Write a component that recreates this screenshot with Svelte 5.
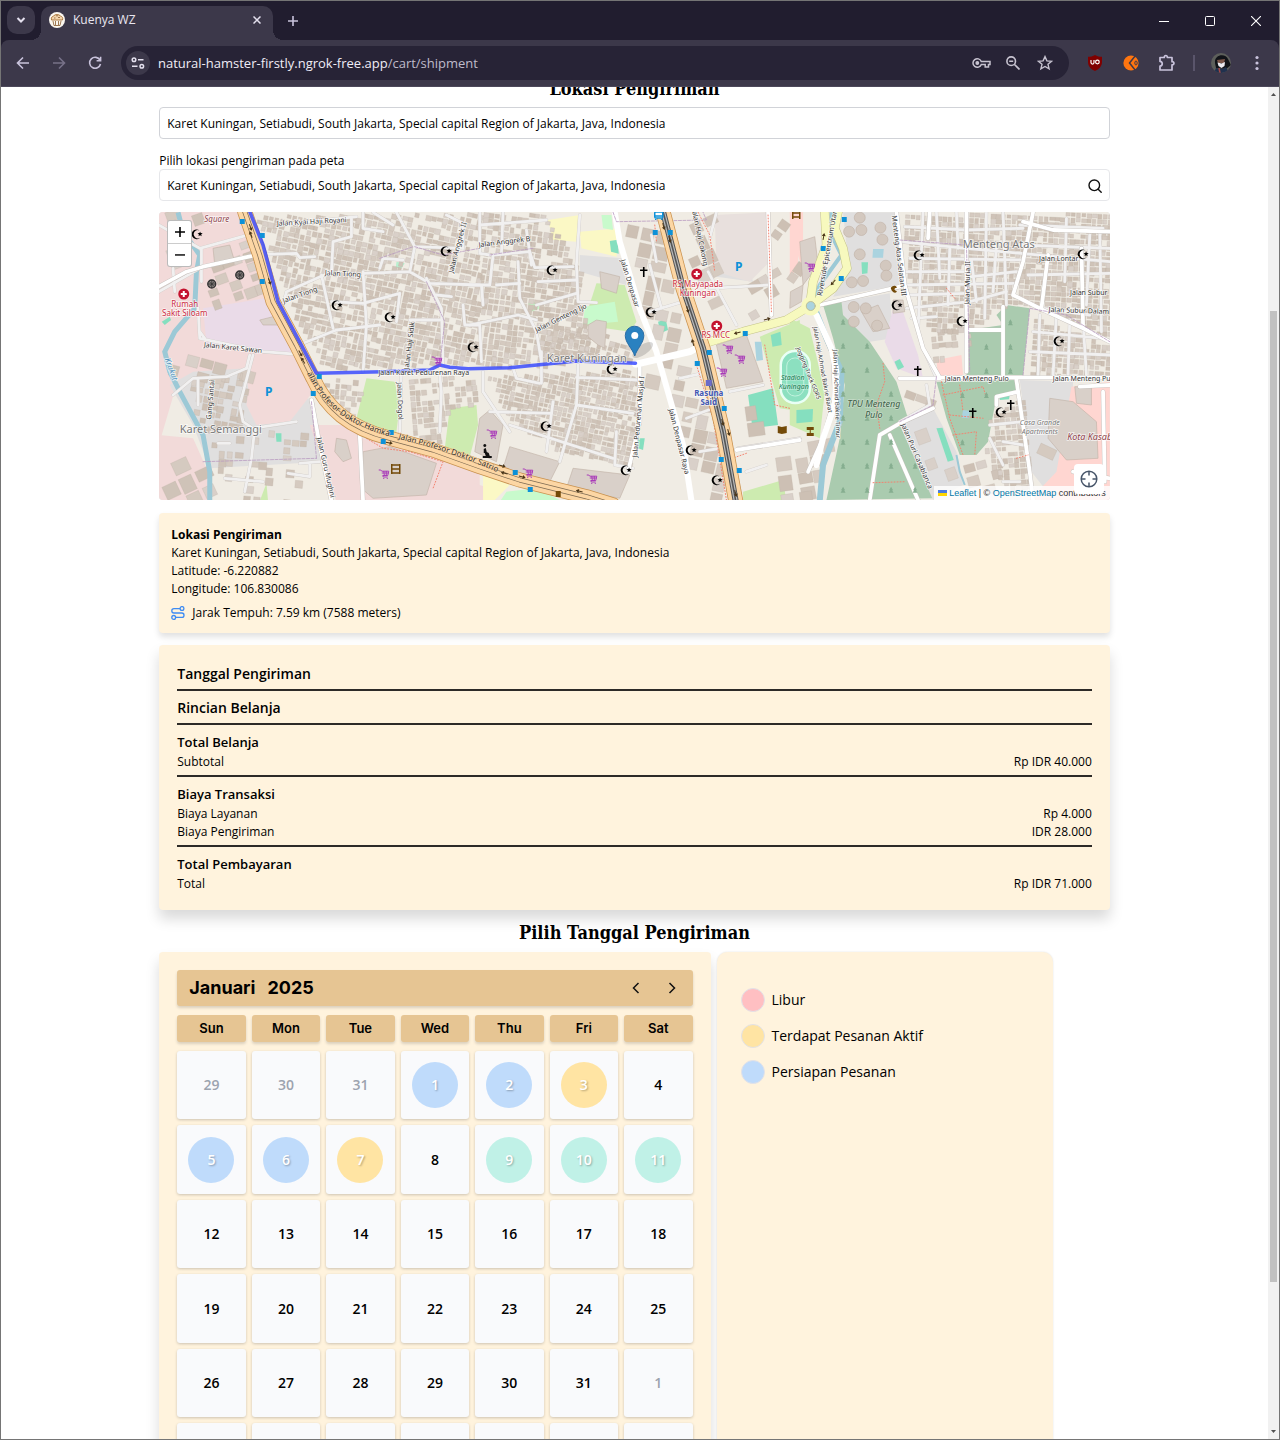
<script>
  const address = 'Karet Kuningan, Setiabudi, South Jakarta, Special capital Region of Jakarta, Java, Indonesia';
  let delivery = $state(address);
  let search = $state(address);

  const weekdays = ['Sun', 'Mon', 'Tue', 'Wed', 'Thu', 'Fri', 'Sat'];
  const marks = { 1: 'prep', 2: 'prep', 3: 'active', 5: 'prep', 6: 'prep', 7: 'active', 9: 'open', 10: 'open', 11: 'open' };
  const days = Array.from({ length: 42 }, (_, i) => {
    const n = i - 2;
    if (n < 1) return { label: 31 + n, out: true, mark: '' };
    if (n > 31) return { label: n - 31, out: true, mark: '' };
    return { label: n, out: false, mark: marks[n] ?? '' };
  });

  const legend = [
    ['off', 'Libur'],
    ['active', 'Terdapat Pesanan Aktif'],
    ['prep', 'Persiapan Pesanan']
  ];

  const sections = [
    { title: 'Total Belanja', rows: [['Subtotal', 'Rp IDR 40.000']] },
    { title: 'Biaya Transaksi', rows: [['Biaya Layanan', 'Rp 4.000'], ['Biaya Pengiriman', 'IDR 28.000']] },
    { title: 'Total Pembayaran', rows: [['Total', 'Rp IDR 71.000']] }
  ];

  // The map is surveyed in three sheets, three units to the pixel.
  const W = -9, C = 311, E = 631;
  const at = (ox, s) =>
    s.replace(/(-?\d+),(-?\d+)/g, (_, x, y) => `${(x / 3 + ox).toFixed(1)},${(y / 3 - 7).toFixed(1)}`);

  const areas = [
    ['#f2dad9', W, '27,20 285,20 340,240 490,520 470,570 300,560 200,500 80,540 27,720'],
    ['#e0dfdf', W, '60,540 130,500 290,490 300,620 480,580 520,770 180,790 130,660'],
    ['#f2dad9', W, '27,690 130,700 175,800 180,890 27,890'],
    ['#f2dad9', W, '300,500 470,500 490,560 420,650 320,660 290,600'],
    ['#f2dad9', W, '480,660 580,660 640,700 720,715 990,800 990,890 640,890 560,890'],
    ['#eadbe8', W, '160,310 355,278 435,445 360,440 170,415'],
    ['#cdebb0', W, '650,520 735,530 750,600 740,680 690,690 620,640'],
    ['#cdebb0', W, '900,610 980,600 985,660 960,755 885,730'],
    ['#cdebb0', W, '350,835 330,888 355,888'],
    ['#85dfbf', W, '378,685 395,685 395,710 380,710'],
    ['#b9f0d0', W, '740,170 765,175 755,190 738,188'],
    ['#85dfbf', W, '36,350 60,335 64,345 45,360'],
    ['#fbf8c5', C, '235,45 330,30 320,110 250,105'],
    ['#fbf8c5', C, '330,80 450,70 440,155 335,130'],
    ['#e0dfdf', C, '330,150 460,160 470,240 330,200'],
    ['#cdebb0', C, '380,235 465,240 500,350 480,380 340,360'],
    ['#c8facc', C, '345,305 435,290 445,350 340,360'],
    ['#c8facc', C, '175,295 200,290 210,310 185,320'],
    ['#c8facc', C, '395,30 425,30 430,75 400,70'],
    ['#85dfbf', C, '420,108 443,104 447,146 424,140'],
    ['#85dfbf', C, '565,350 588,343 595,375 572,385'],
    ['#85dfbf', C, '505,700 525,700 520,735 505,730'],
    ['#cdebb0', C, '0,610 20,640 10,710 0,710'],
    ['#f2dad9', C, '0,830 60,850 60,890 0,890'],
    ['#fbf8c5', C, '40,800 120,840 70,890 40,890'],
    ['#c8facc', C, '110,860 200,850 280,890 90,890'],
    ['#e0dfdf', C, '730,170 820,130 850,230 740,215'],
    ['#e8e0dd', C, '735,30 895,22 900,170 840,230 740,200'],
    ['#ffd6d1', C, '960,22 1000,22 1000,200 975,120'],
    ['#cdebb0', C, '870,395 990,345 1000,620 930,610'],
    ['#85dfbf', C, '835,570 910,550 925,660 848,670'],
    ['#85dfbf', C, '903,390 932,380 936,420 908,425'],
    ['#aad3df', C, '855,410 875,410 880,465 860,468'],
    ['#cdebb0', C, '820,860 940,825 950,890 820,890'],
    ['#ffd6d1', E, '0,22 30,22 25,180 0,225'],
    ['#e0dfdf', E, '160,22 320,22 335,240 130,275 180,190 170,120'],
    ['#e0dfdf', E, '155,290 300,265 310,400 240,410 160,330'],
    ['#aacbaf', E, '100,300 155,288 160,330 240,410 320,530 430,880 110,885 150,700 165,540 130,400'],
    ['#aacbaf', E, '535,375 640,360 620,330 650,300 720,310 700,510 530,510'],
    ['#aacbaf', E, '440,530 680,525 680,560 620,575 595,710 560,750 510,750 470,640'],
    ['#eadbe8', E, '310,310 340,320 385,450 400,520 320,490 285,410'],
    ['#ffd6d1', E, '440,465 515,450 520,510 445,515'],
    ['#e0dfdf', E, '330,660 430,610 500,740 520,840 430,885'],
    ['#e0dfdf', E, '690,525 850,530 840,800 780,870 725,800'],
    ['#ffd6d1', E, '845,545 960,530 960,885 720,885 800,800'],
    ['#cdebb0', E, '0,340 60,370 105,560 90,700 0,660'],
    ['#85dfbf', E, '440,670 458,668 492,765 474,770'],
    ['#85dfbf', E, '314,470 330,462 343,486 325,495'],
    ['#85dfbf', E, '215,172 235,172 233,205 217,207'],
    ['#85dfbf', E, '20,615 70,612 68,650 20,655'],
    ['#85dfbf', E, '630,572 660,570 658,583 630,585'],
    ['#aad3df', E, '250,132 282,132 280,158 248,158'],
    ['#aad3df', E, '520,615 540,618 538,640 516,638']
  ].map(([fill, ox, p]) => ({ fill, p: at(ox, p) }));

  // Housing blocks: outline, cell size, rotation and the odds that a cell is built.
  const blocks = [
    [W, '300,30 780,22 990,22 990,470 520,485 420,300 340,80', 17, 12, 0.86],
    [W, '520,520 640,520 610,640 540,600', 17, 5, 0.7],
    [W, '760,520 880,510 980,520 980,590 890,620 870,720 780,690', 17, -5, 0.75],
    [W, '100,520 280,500 280,660 180,690 140,640', 22, 10, 0.65],
    [W, '180,700 460,650 470,770 200,790', 24, 4, 0.35],
    [W, '40,230 150,180 150,20 27,20', 36, -20, 0.35],
    [W, '170,100 310,60 340,250 170,300', 34, -20, 0.55],
    [W, '50,460 150,430 300,460 290,490 90,530', 42, 15, 0.7],
    [W, '30,740 150,740 160,885 30,885', 54, -25, 0.7],
    [W, '190,800 420,780 470,885 190,885', 30, 5, 0.4],
    [C, '30,22 220,22 330,190 330,290 370,450 200,480 30,480', 17, 8, 0.84],
    [C, '220,370 370,360 490,430 480,460 210,460', 17, 15, 0.78],
    [C, '50,510 210,500 500,490 500,640 480,780 300,750 120,650', 15, 12, 0.93],
    [C, '460,60 560,40 640,330 680,430 570,460 510,310', 46, 12, 0.74],
    [C, '510,480 660,470 730,680 770,870 670,880 600,600', 44, 12, 0.72],
    [C, '630,40 700,30 780,330 720,400 680,300', 46, -25, 0.7],
    [C, '770,560 830,550 850,690 790,700', 50, -8, 0.8],
    [C, '810,740 990,700 990,885 830,850', 56, -8, 0.6],
    [C, '820,240 900,180 900,310 800,350', 38, -30, 0.6],
    [C, '910,30 960,30 990,180 920,270', 38, 35, 0.5],
    [E, '340,22 960,22 960,400 730,300 700,290 640,300 540,370 420,380 350,200', 16, 3, 0.93],
    [E, '725,330 960,420 960,510 715,510', 16, 4, 0.9],
    [E, '390,380 530,360 530,440 430,460', 20, -5, 0.6],
    [E, '590,640 700,570 715,840 660,870 580,760', 17, -4, 0.8],
    [E, '330,550 430,530 420,600 340,640', 34, 20, 0.75],
    [E, '345,660 430,630 500,820 430,850', 46, -20, 0.4],
    [E, '0,720 100,700 80,885 0,885', 44, -10, 0.75],
    [E, '510,750 640,800 640,870 540,870', 38, -15, 0.5],
    [E, '730,590 840,580 830,790 740,790', 52, 25, 0.35]
  ];

  function build() {
    let seed = 7;
    const rnd = () => ((seed = (seed * 16807) % 2147483647) / 2147483647);
    const tones = ['#d5cac0', '#cfc3b8', '#d9d0c9', '#cdc0b4'];
    const out = [];
    for (const [ox, outline, size, turn, odds] of blocks) {
      const poly = outline.split(' ').map((p) => p.split(',').map(Number));
      const inside = (x, y) => {
        let hit = false;
        for (let i = 0, j = poly.length - 1; i < poly.length; j = i++) {
          const [xi, yi] = poly[i], [xj, yj] = poly[j];
          if (yi > y !== yj > y && x < ((xj - xi) * (y - yi)) / (yj - yi) + xi) hit = !hit;
        }
        return hit;
      };
      const cx = 500, cy = 450, a = (turn * Math.PI) / 180;
      for (let v = -700; v < 700; v += size) {
        for (let u = -750; u < 750; u += size) {
          const x = cx + u * Math.cos(a) - v * Math.sin(a);
          const y = cy + u * Math.sin(a) + v * Math.cos(a);
          if (!inside(x, y) || rnd() > odds) continue;
          const w = size * (0.62 + rnd() * 0.4), h = size * (0.6 + rnd() * 0.36);
          out.push({
            d: `M${(x / 3 + ox).toFixed(1)} ${(y / 3 - 7).toFixed(1)}l${((w * Math.cos(a)) / 3).toFixed(1)} ${((w * Math.sin(a)) / 3).toFixed(1)}l${((-h * Math.sin(a)) / 3).toFixed(1)} ${((h * Math.cos(a)) / 3).toFixed(1)}l${((-w * Math.cos(a)) / 3).toFixed(1)} ${((-w * Math.sin(a)) / 3).toFixed(1)}z`,
            t: Math.floor(rnd() * 4)
          });
        }
      }
    }
    return tones.map((fill, t) => ({ fill, d: out.filter((b) => b.t === t).map((b) => b.d).join('') }));
  }
  const houses = build();

  const landmarks = [
    [W, '640,740 720,725 860,775 830,870 670,880 635,850'],
    [W, '560,700 590,705 605,760 580,770 555,740'],
    [W, '190,130 240,120 255,170 195,180'],
    [W, '330,345 390,330 400,360 340,360'],
    [C, '30,640 60,615 100,660 80,770 15,740'],
    [C, '120,725 270,770 240,830 100,790'],
    [C, '310,790 480,810 450,880 290,850'],
    [C, '740,420 830,390 880,530 770,550'],
    [C, '355,360 380,345 410,350 405,430 385,420 355,395'],
    [C, '390,200 450,215 440,265 395,250'],
    [E, '215,320 265,300 300,370 250,380'],
    [E, '310,285 340,285 345,320 310,325'],
    [E, '780,580 850,590 920,650 925,760 830,765 775,700'],
    [E, '855,545 905,545 905,600 860,595'],
    [E, '30,110 75,95 85,180 40,240'],
    [E, '2,260 40,240 35,290 0,310']
  ].map(([ox, p]) => at(ox, p));

  const tanks = [[210,38],[272,68],[178,80],[215,75],[278,104],[210,148],[288,182],[186,232],[220,228],[290,212],[192,306],[228,310],[192,350],[262,362]]
    .map(([x, y]) => [x / 3 + E, y / 3 - 7]);

  const rivers = [
    [5, at(W, 'M85,22 L100,80 150,150 140,200 135,310 75,380 45,440 60,500 90,560 160,690 180,800 180,887')],
    [4, at(E, 'M125,22 L125,90 155,150 90,240 62,303')],
    [6, at(E, 'M75,310 L110,400 155,500 150,650 100,780 90,887')],
    [2, at(E, 'M500,750 L510,800 525,840')]
  ];

  const minor = [
    at(W, 'M27,260 L150,190 310,150 440,145 450,158 495,155'),
    at(W, 'M27,60 L150,130 330,80 M155,130 L155,230 M70,190 L75,260'),
    at(W, 'M145,310 L150,400 340,440 470,450 M300,450 L290,490 M165,400 L150,380'),
    at(W, 'M70,570 L130,520 230,515 290,490 M145,520 L145,600 M310,450 L270,600 280,650 310,670 440,650'),
    at(W, 'M315,670 L305,760 285,860 M225,820 L340,830 M205,715 L240,715 M450,775 L510,770 M480,775 L480,815 415,805'),
    at(W, 'M390,60 L620,35 M605,40 L605,95 550,110 545,200 410,260 400,300'),
    at(W, 'M515,210 L550,370 M460,415 L560,375 690,360 M640,200 L650,360 640,500 M545,290 L640,295 750,265 740,350'),
    at(W, 'M740,22 L795,125 780,200 840,235 990,240 M795,125 L940,130 M640,205 L780,200 M690,190 L700,160 760,165'),
    at(W, 'M830,220 L875,310 880,480 M780,345 L870,345 M755,500 L750,680 M870,510 L875,560 870,680 M940,300 L945,360 990,360'),
    at(W, 'M640,22 L640,70 700,80 M860,270 L905,275 M670,22 L730,60 M890,30 L940,55 940,130'),
    at(C, 'M0,240 L60,240 70,150 180,140 195,188 310,185 M35,240 L40,300 M30,145 L60,150'),
    at(C, 'M185,180 L170,75 M330,30 L320,180 325,290 380,293 M145,170 L150,280 200,380 215,470 M215,440 L215,535'),
    at(C, 'M200,300 L320,265 M40,500 L40,560 120,680 M130,490 L140,520 210,535 M60,620 L245,625 M120,660 L430,760'),
    at(C, 'M325,480 L320,600 270,770 M320,517 L510,525 M320,600 L490,625 M250,590 L230,740 M440,680 L435,780 490,790'),
    at(C, 'M540,180 L575,310 M540,320 L640,290 M545,90 L560,170 M630,520 L720,500 M650,640 L730,610 M690,740 L750,730'),
    at(C, 'M30,60 L230,45 M30,22 L30,140 M100,22 L95,145 M205,230 L320,225 M200,345 L145,330 0,360 M30,360 L35,470 M80,240 L150,235'),
    at(C, 'M715,200 L800,360 M720,250 L900,240 M740,22 L720,100 M780,560 L880,540 M805,730 L990,700 M830,800 L890,780'),
    at(E, 'M330,110 L530,130 960,170 M360,160 L700,165 M345,240 L680,235 M350,310 L540,290 650,260'),
    at(E, 'M400,22 L385,380 M440,22 L450,220 M590,22 L585,340 M480,130 L475,300 M640,22 L650,300 M620,120 L610,260'),
    at(E, 'M345,65 L530,75 700,70 M340,200 L540,200 M545,215 L680,200 M355,270 L530,265 M545,165 L560,290 M365,340 L440,335 M500,22 L505,130'),
    at(E, 'M690,60 L940,70 M830,40 L825,230 M900,90 L890,300 M760,310 L900,330 M730,380 L940,400 M880,350 L890,510 M800,330 L790,510'),
    at(E, 'M715,210 L960,205 M690,120 L960,130 M720,440 L960,450 M750,330 L745,510 M840,345 L835,510 M930,70 L935,380'),
    at(E, 'M400,430 L440,520 M410,540 L420,600 330,650 M600,660 L700,650 M640,710 L700,720 M600,700 L640,780 M690,830 L640,830')
  ];

  const streets = [
    at(W, 'M485,585 L510,720 545,887'),
    at(W, 'M630,690 L640,887'),
    at(W, 'M27,245 L110,200 160,185 320,150'),
    at(C, 'M435,22 L450,110 510,310 560,440 600,580 640,720 665,887'),
    at(C, 'M497,480 L660,440 715,410'),
    at(C, 'M510,480 L510,650 475,800'),
    at(C, 'M800,735 L990,705'),
    at(C, 'M895,22 L905,330'),
    at(E, 'M80,330 L130,450 135,580 100,700 55,800 M90,300 L330,245'),
    at(E, 'M320,22 L345,240 400,430 450,518 960,518'),
    at(E, 'M730,22 L700,170 670,270 760,315 880,370 960,410'),
    at(E, 'M680,525 L720,800 730,885 M620,600 L620,575 685,560'),
    at(E, 'M700,50 L790,75 960,80 M775,150 L755,310 M875,130 L880,360'),
    at(E, 'M240,885 L270,690 330,655 430,610 M300,690 L385,885 M420,22 L415,100'),
    at(E, 'M535,375 L640,375 640,305 M640,375 L640,510 M530,22 L530,500'),
    at(E, 'M330,520 L450,520 M870,545 L960,540 M940,560 L945,830 M850,800 L960,820')
  ];

  const trunks = [
    at(W, 'M285,20 L330,150 370,290 440,420 490,520 C530,610 600,670 720,700 L850,735 990,785') + at(C, 'L150,825 350,875 430,900'),
    at(C, 'M580,20 L640,250 700,430 760,680 800,900')
  ];
  const yellows = [
    at(C, 'M715,412 L820,380 950,345') + at(E, 'L60,303 L130,250 172,190 160,130 135,70 145,20'),
    at(E, 'M60,303 L70,230 110,120 105,20')
  ];
  const paths = [
    at(E, 'M280,475 L285,530 260,600 270,670 M250,833 L345,830'),
    at(E, 'M455,530 L480,640 520,750 M510,540 L520,620 M460,570 L580,545 590,580 M480,630 L580,640 M490,690 L560,680 555,750'),
    at(C, 'M685,22 L720,90 735,200 M885,420 L915,600 960,610 M680,480 L730,640 770,885 M895,30 L905,320'),
    at(W, 'M650,700 L700,730 780,740 880,770 850,850'),
    at(C, 'M555,60 L560,110 M760,770 L830,745 M320,850 L400,880'),
    at(E, 'M470,250 L495,280 M680,760 L715,750')
  ];
  const bounds = [
    at(W, 'M690,160 L790,125 M795,125 L880,150 990,130 M830,230 L885,350 870,480 M160,770 L500,760 M485,590 L500,760'),
    at(C, 'M430,22 L440,50 710,45 700,22 M60,150 L190,130'),
    at(E, 'M330,105 L530,120 540,500 M700,510 L720,310 830,330 960,410 M440,515 L430,600 330,650')
  ];

  const route = at(W, 'M300,20 L340,120 385,290 500,505 700,500 840,495 870,480 900,487 955,491') + at(C, 'L120,488 320,468 497,475');

  const labels = [
    [58, 10, 0, 'Square', 'mall'],
    [153, 12, -3, 'Jalan Kyai Haji Royani'],
    [184, 64, 3, 'Jalan Tiong'], [142, 85, -20, 'Jalan Tiong'],
    [74, 138, 6, 'Jalan Karet Sawan'], [10, 158, 70, 'Krukut', 'water'],
    [54, 188, -85, 'Gang Santai'], [265, 163, 0, 'Jalan Karet Pedurenan Raya'],
    [253, 134, -83, 'Jalan Haji Sidik'], [239, 189, 88, 'Jalan Dogol'],
    [301, 36, -75, 'Jalan Anggrek II'], [165, 256, 77, 'Jalan Guru Mughni'],
    [346, 32, -7, 'Jalan Anggrek B'], [403, 108, -26, 'Jalan Genteng Ijo'],
    [469, 72, 73, 'Jalan Denpasar'], [518, 230, 76, 'Jalan Denpasar Raya'],
    [482, 205, -85, 'Jalan Pedurenan Masjid I'], [539, 26, 78, 'Jalan Haji Cokong'],
    [26, 95, 0, 'Rumah', 'health'], [26, 104, 0, 'Sakit Siloam', 'health'],
    [539, 75, 0, 'RS Mayapada', 'health'], [539, 84, 0, 'Kuningan', 'health'],
    [557, 126, 0, 'RS MCC', 'health'],
    [550, 184, 0, 'Rasuna', 'station'], [550, 193, 0, 'Said', 'station'],
    [634, 168, 0, 'Stadion', 'sport'], [635, 177, 0, 'Kuningan', 'sport'],
    [671, 40, -80, 'Riverside Epicentrum Utara'],
    [662, 158, 80, 'Jalan Haji Achmad Bakrie Barat', 'small'], [676, 182, 88, 'Jalan Haji Achmad Bakrie Timur', 'small'],
    [648, 162, 68, 'Jogging Track GORS', 'small'],
    [715, 195, 0, 'TPU Menteng', 'park'], [715, 206, 0, 'Pulo', 'park'],
    [756, 245, 67, 'Jalan Puri Casablanca'], [738, 44, 83, 'Menteng Atas Selatan III'],
    [811, 71, -89, 'Jalan Muria II'], [900, 49, 0, 'Jalan Lontar'],
    [930, 83, 0, 'Jalan Subur'], [920, 101, 2, 'Jalan Subur Dalam'],
    [818, 169, 0, 'Jalan Menteng Pulo'], [926, 169, 0, 'Jalan Menteng Pulo'],
    [881, 213, 0, 'Casa Grande', 'estate'], [881, 222, 0, 'Apartments', 'estate'],
    [942, 228, 0, 'Kota Kasablanka', 'mall big'],
    [62, 221, 0, 'Karet Semanggi', 'place'], [428, 150, 0, 'Karet Kuningan', 'place'], [840, 36, 0, 'Menteng Atas', 'place']
  ];

  const mosques = [[38,22],[287,39],[393,58],[178,93],[231,105],[314,135],[387,214],[453,157],[492,100],[467,258],[532,238],[558,268],[760,43],[924,42],[738,93],[803,109],[900,129],[842,200]];
  const crosses = [[485,60],[759,159],[814,201],[852,193]];
  const clinics = [[25,82],[538,62],[558,114]];
  const carts = [[278,149],[225,262],[333,222],[369,261],[569,137],[581,147],[563,160],[433,267],[651,55]];
  const stops = [[83,9],[103,23],[103,69],[160,164],[154,181],[232,220],[224,229],[356,260],[371,277],[496,20],[511,20],[586,121],[550,140],[538,151],[565,196],[562,247],[580,258],[685,7],[664,36],[682,66]];
  const arrows = [[92,16,70],[92,22,250],[111,70,70],[142,142,60],[144,148,240],[231,231,10],[344,254,15],[345,261,195],[364,265,15],[420,279,195],[505,15,75],[511,28,75],[529,98,75],[534,130,255],[564,211,75],[570,221,75],[577,282,75],[609,107,-15],[578,121,165],[665,24,-80],[674,71,130]];
  const trees = [];
  for (let y = 350; y < 880; y += 72) {
    for (let x = 160; x < 420; x += 72) {
      if (x > 120 && x < 210 + (y - 300) * 0.36) trees.push([x / 3 + E, y / 3 - 7]);
    }
  }
  for (const [x, y] of [[590,425],[662,425],[590,497],[662,497],[662,352],[518,570],[590,570],[518,712]]) trees.push([x / 3 + E, y / 3 - 7]);
</script>

<div class="window">
  <header class="chrome">
    <div class="tabs">
      <button class="tab-menu" aria-label="Search tabs">
        <svg width="12" height="12" viewBox="0 0 12 12" fill="none" stroke="#e4e0ee" stroke-width="2"><path d="M2.5 4l3.5 3.5L9.500 4" /></svg>
      </button>
      <div class="tab">
        <svg width="16" height="16" viewBox="0 0 16 16">
          <circle cx="8" cy="8" r="8" fill="#fbf7f0" />
          <path d="M2.500 8c-.8-3 1.300-3.600 2-4 1.500-1.900 5.500-1.900 7 0 1.600.4 2.700 2 2 4z" fill="#f4d6ae" stroke="#ad7b42" />
          <path d="M4 9l1 4.500h6L12 9M6.500 9v4M9.500 9v4M5 6h1.500M9 5.500h2M7 3.800h2" fill="none" stroke="#936a40" stroke-width=".9" />
        </svg>
        <span>Kuenya WZ</span>
        <button aria-label="Close tab">
          <svg width="8" height="8" viewBox="0 0 8 8" stroke="#e4e0ee" stroke-width="1.500"><path d="M.5.5l7 7M7.500.5l-7 7" /></svg>
        </button>
      </div>
      <button class="new-tab" aria-label="New tab">
        <svg width="10" height="10" viewBox="0 0 10 10" stroke="#c9c3dc" stroke-width="1.600"><path d="M5 0v10M0 5h10" /></svg>
      </button>
      <div class="window-buttons">
        <button aria-label="Minimize"><svg width="10" height="10" viewBox="0 0 10 10" stroke="#fff"><path d="M0 5.500h10" /></svg></button>
        <button aria-label="Maximize"><svg width="10" height="10" viewBox="0 0 10 10" fill="none" stroke="#fff"><rect x=".5" y=".5" width="9" height="9" rx="1" /></svg></button>
        <button aria-label="Close"><svg width="10" height="10" viewBox="0 0 10 10" stroke="#fff" stroke-width="1.100"><path d="M0 0l10 10M10 0L0 10" /></svg></button>
      </div>
    </div>
    <div class="toolbar">
      <button aria-label="Back"><svg width="14" height="14" viewBox="0 0 14 14" fill="none" stroke="#c9c3dc" stroke-width="1.600"><path d="M13 7H2M7 1.500L1.500 7 7 12.500" /></svg></button>
      <button aria-label="Forward"><svg width="14" height="14" viewBox="0 0 14 14" fill="none" stroke="#777188" stroke-width="1.600"><path d="M1 7h11M7 1.500L12.500 7 7 12.500" /></svg></button>
      <button aria-label="Reload"><svg width="14" height="14" viewBox="0 0 14 14" fill="none" stroke="#c9c3dc" stroke-width="1.600"><path d="M12 4.200A5.500 5.500 0 1 0 12.500 8M12.600.8v4H8.600" /></svg></button>
      <div class="omnibox">
        <button class="site" aria-label="Site information">
          <svg width="14" height="12" viewBox="0 0 14 12" fill="none" stroke="#e4e0ee" stroke-width="1.500"><circle cx="3" cy="2.800" r="1.800" /><path d="M7 2.800h5.500M1 9.200h5.500" /><circle cx="10.800" cy="9.200" r="1.800" /></svg>
        </button>
        <span class="url">natural-hamster-firstly.ngrok-free.app<i>/cart/shipment</i></span>
        <button aria-label="Passwords"><svg width="19" height="12" viewBox="0 0 19 12" fill="none" stroke="#c7c3d0" stroke-width="1.500"><path d="M9.300 4.500H18v3h-1.500V10h-3.300V7.500H9.300a4.300 4.300 0 1 1 0-3z" /><circle cx="5.300" cy="6" r="1.200" fill="#c7c3d0" /></svg></button>
        <button aria-label="Zoom"><svg width="14" height="14" viewBox="0 0 14 14" fill="none" stroke="#c7c3d0" stroke-width="1.600"><circle cx="5.200" cy="5.200" r="4.300" /><path d="M8.500 8.500l5 5M3.200 5.200h4" /></svg></button>
        <button aria-label="Bookmark"><svg width="16" height="16" viewBox="0 0 16 16" fill="none" stroke="#c7c3d0" stroke-width="1.400"><path d="M8 1.600l1.900 4.300 4.700.4-3.600 3 1.100 4.600L8 11.500l-4.100 2.400L5 9.300l-3.600-3 4.700-.4z" /></svg></button>
      </div>
      <button aria-label="Ad blocker">
        <svg width="14" height="16" viewBox="0 0 14 16"><path d="M7 0c2 1.300 4.500 1.800 7 1.800V7c0 4.500-3 7-7 9-4-2-7-4.500-7-9V1.800C2.500 1.800 5 1.300 7 0z" fill="#800000" /><path d="M3 5v2.600a1.500 1.500 0 0 0 3 0V5" fill="none" stroke="#fff" stroke-width="1.200" /><circle cx="9.400" cy="7" r="1.800" fill="none" stroke="#fff" stroke-width="1.200" /></svg>
      </button>
      <button aria-label="Extension">
        <svg width="16" height="16" viewBox="0 0 16 16"><circle cx="8" cy="8" r="7.600" fill="#ff750f" /><path d="M12.500.5L6.500 8l6 7.500" fill="none" stroke="#3c384a" stroke-width="1.500" /><ellipse cx="13" cy="8" rx="1.200" ry="2" fill="none" stroke="#3c384a" /></svg>
      </button>
      <button aria-label="Extensions">
        <svg width="18" height="18" viewBox="0 0 18 18" fill="none" stroke="#c9c3dc" stroke-width="1.700"><path d="M2 3.500h4.300c-.4-2.600 3.400-2.600 3 0H14v4.200c2.600-.4 2.600 3.500 0 3.100V16H2v-3.800c3-.2 3-4.600 0-4.800z" stroke-linejoin="round" /></svg>
      </button>
      <span class="divider"></span>
      <button aria-label="Profile">
        <svg width="20" height="20" viewBox="0 0 20 20"><defs><clipPath id="face"><circle cx="10" cy="10" r="10" /></clipPath></defs>
          <g clip-path="url(#face)"><rect width="20" height="20" fill="#5d5f5b" /><path d="M4 10C3 1 15 0 17 6l3 6-5 4-10-1z" fill="#111318" /><path d="M6 7l8-1-1 4H7z" fill="#7b564a" /><path d="M6.500 9.500l4 1 3.500-1.500-.5 4-3 2-3-2z" fill="#eceaf0" /><path d="M3 20l2-5 6 1 4-2 3 6z" fill="#20314e" /><path d="M8 15l1 5" stroke="#a34744" stroke-width="1.500" /></g></svg>
      </button>
      <button aria-label="Menu"><svg width="4" height="16" viewBox="0 0 4 16" fill="#c9c3dc"><circle cx="2" cy="2.500" r="1.600" /><circle cx="2" cy="8" r="1.600" /><circle cx="2" cy="13.500" r="1.600" /></svg></button>
    </div>
  </header>

  <div class="viewport">
    <main>
      <h2>Lokasi Pengiriman</h2>
      <input class="field" aria-label="Lokasi Pengiriman" bind:value={delivery} />
      <label for="search">Pilih lokasi pengiriman pada peta</label>
      <div class="field search">
        <input id="search" bind:value={search} />
        <button aria-label="Cari"><svg width="14" height="14" viewBox="0 0 14 14" fill="none" stroke="#111" stroke-width="1.400"><circle cx="6.300" cy="6.300" r="5.300" /><path d="M10.200 10.200l3 3" stroke-linecap="round" /></svg></button>
      </div>

      <div class="map">
        <svg class="tiles" viewBox="0 0 951 288" preserveAspectRatio="xMidYMid slice">
          <defs>
            <g id="mosque"><path d="M2.800-3.600A4.900 4.900 0 1 0 3.600 3.400 4.100 4.100 0 1 1 2.800-3.600z" /><path d="M3.300-2.600l.7 1.700 1.900.1-1.500 1.200.6 1.800-1.700-1-1.600 1 .5-1.800-1.400-1.200 1.900-.1z" /></g>
            <path id="cross" d="M-.8-5H.8v2.600h2.900v1.500H.8V5H-.8V-.9h-2.900v-1.500h2.900z" />
            <path id="cart" d="M-5-4h2l1 1.200h7L4 1.500h-5L-.5 3h4.500M-2-1h7M0-3l.6 4.500M2.500-3v4.500M-.5 4.500h1M3 4.500h1" fill="none" stroke="#a939b9" />
            <path id="arrow" d="M-4-.5h4v-1.500l3 2-3 2V.5h-4z" fill="#4a3518" />
            <path id="tree" d="M0-3L2 .5H1L2.500 3h-5L-1 .5h-1z" fill="#86ae90" />
            <path id="hamka" d={at(W, 'M472,505 C515,595 580,655 712,692')} />
            <path id="satrio" d={at(W, 'M748,702 L860,732 955,765') + at(C, 'L80,800')} />
          </defs>
          <rect width="951" height="288" fill="#f0ece4" />
          {#each areas as a}<polygon points={a.p} fill={a.fill} />{/each}
          {#each houses as h}<path d={h.d} fill={h.fill} stroke="#bcaea0" stroke-width=".25" />{/each}
          {#each landmarks as p}<polygon points={p} fill="#d9d0c9" stroke="#c0b0a4" stroke-width=".6" />{/each}
          {#each tanks as [x, y]}<circle cx={x} cy={y} r="5.500" fill="#d3c8bf" stroke="#c0b0a4" stroke-width=".6" />{/each}
          {#each rivers as [w, d]}<path {d} fill="none" stroke="#9cc9d6" stroke-width={w} />{/each}
          <g fill="none" stroke-linejoin="round" stroke-linecap="round">
            {#each minor as d}<path {d} stroke="#cfcac6" stroke-width="3.400" />{/each}
            {#each minor as d}<path {d} stroke="#f1f0f0" stroke-width="2.800" />{/each}
            {#each streets as d}<path {d} stroke="#c4bfbb" stroke-width="4.600" />{/each}
            {#each streets as d}<path {d} stroke="#fff" stroke-width="3.800" />{/each}
            <path d={at(C, 'M435,22 L450,110 510,310 560,440 600,580 640,720 665,887')} stroke="#fff" stroke-width="6" />
            <path d={at(C, 'M497,478 L660,440 715,410')} stroke="#fff" stroke-width="7" />
            <path d={at(E, 'M80,330 L125,430 140,500 135,600 100,700 80,780')} stroke="#fff" stroke-width="6" />
            {#each bounds as d}<path {d} stroke="#b99bc0" stroke-width=".8" stroke-dasharray="3 1.500" />{/each}
            {#each paths as d}<path {d} stroke="#f4826f" stroke-width="1" stroke-dasharray="1 2" />{/each}
            {#each yellows as d}<path {d} stroke="#c3c28a" stroke-width="9" /><path {d} stroke="#f7f9be" stroke-width="8" />{/each}
            <circle cx="652" cy="94" r="7" fill="#aad3df" stroke="#f7f9be" stroke-width="5" />
            <circle cx="652" cy="94" r="4.500" stroke="#b8b78b" stroke-width=".8" />
            {#each trunks as d}
              <path {d} stroke="#c9924f" stroke-width="15" />
              <path {d} stroke="#fcd6a4" stroke-width="13.500" />
            {/each}
            <path d={trunks[0]} stroke="#7d6a52" stroke-width="5" />
            <path d={trunks[0]} stroke="#fcd6a4" stroke-width="3.600" />
            <path d={trunks[1]} stroke="#555" stroke-width="6" />
            <path d={trunks[1]} stroke="#b9b9b9" stroke-width="4" />
            <path d={trunks[1]} stroke="#555" stroke-width="1.600" />
          </g>
          <rect x="622" y="139" width="29" height="52" rx="14" fill="#8ce0c0" stroke="#e9fff5" stroke-width="2.500" />
          <rect x="628" y="146" width="17" height="38" rx="8" fill="none" stroke="#c3f3df" />
          {#each trees as [x, y]}<use href="#tree" {x} {y} />{/each}
          <path d={route} fill="none" stroke="#3346ff" stroke-opacity=".82" stroke-width="3.600" stroke-linejoin="round" stroke-linecap="round" />
          {#each arrows as [x, y, r]}<use href="#arrow" transform={`translate(${x} ${y}) rotate(${r})`} />{/each}
          {#each stops as [x, y]}<rect x={x - 2} y={y - 2} width="5" height="5" fill="#0d91d8" />{/each}
          <rect x="547" y="168" width="6" height="6" fill="#6c6cc9" />
          <g fill="#fff" stroke="#0d91d8" stroke-width="1.500"><rect x="496" y="0" width="8" height="6" rx="1" /><path d="M497 7v1M503 7v1M496 4h8" /></g>
          {#each mosques as [x, y]}<use href="#mosque" {x} {y} />{/each}
          {#each crosses as [x, y]}<use href="#cross" {x} {y} />{/each}
          {#each carts as [x, y]}<use href="#cart" {x} {y} />{/each}
          {#each clinics as [x, y]}
            <circle cx={x} cy={y} r="5.500" fill="#c4122e" /><path d={`M${x - 3} ${y}h6M${x} ${y - 3}v6`} stroke="#fff" stroke-width="2" />
          {/each}
          {#each [[53, 72], [81, 63]] as [x, y]}
            <circle cx={x} cy={y} r="4" fill="#8a8482" stroke="#333" stroke-width="1.300" /><path d={`M${x - 4} ${y}h8M${x} ${y - 4}v8M${x - 3} ${y - 3}l6 6M${x + 3} ${y - 3}l-6 6`} stroke="#333" stroke-width=".8" />
          {/each}
          <g fill="none" stroke="#734a08" stroke-width="1.500"><path d="M233 252v10M241 252v10M233 253h8M233 261h8M233 257h8" /><path d="M634 0v7M641 0v7M634 1h7M634 5h7" /></g>
          <path d="M619 214l4 1 5-1v7l-5 1-4-1zM648 215h7v3h-3v3h3v3h-7v-3h3v-3h-3zM397 279h5v6h-5zM732 76c2-3 6-3 6 0-3 0-3 2 0 3 0 3-5 2-6-3z" fill="#734a08" />
          <path d="M324 246h9v-2h-2l-1-3-2-1-1-4-2 1v4h1l1 3h-3zM326 235a1.500 1.500 0 1 1 .1 0" fill="#111" />
          <g class="parking"><text x="110" y="184">P</text><text x="580" y="59">P</text></g>
          {#each labels as [x, y, r, text, kind]}
            <text class={`name ${kind ?? ''}`} transform={`translate(${x} ${y}) rotate(${r})`}>{text}</text>
          {/each}
          <text class="name main"><textPath href="#hamka" startOffset="50%">Jalan Profesor Doktor Hamka</textPath></text>
          <text class="name main"><textPath href="#satrio" startOffset="50%">Jalan Profesor Doktor Satrio</textPath></text>
          <ellipse cx="484" cy="138" rx="12" ry="5" fill="#000" opacity=".15" transform="rotate(-35 484 138)" />
          <path d="M476 144C474 137 466.500 131 466.500 123.500a9.300 9.300 0 0 1 18.600 0C485 131 478 137 476 144z" fill="#2a81c0" stroke="#2a6da5" />
          <circle cx="476" cy="123.500" r="3.500" fill="#fff" />
        </svg>
        <div class="zoom">
          <button aria-label="Zoom in"><svg width="10" height="10" viewBox="0 0 10 10" stroke="#000" stroke-width="1.600"><path d="M5 0v10M0 5h10" /></svg></button>
          <button aria-label="Zoom out"><svg width="10" height="10" viewBox="0 0 10 10" stroke="#000" stroke-width="1.300"><path d="M0 5h10" /></svg></button>
        </div>
        <div class="credit">
          <svg width="9" height="6" viewBox="0 0 9 6"><path d="M0 0h9v3H0z" fill="#4c7be1" /><path d="M0 3h9v3H0z" fill="#ffd500" /></svg>
          <a href="#leaflet">Leaflet</a> | © <a href="#osm">OpenStreetMap</a> contributors
        </div>
        <button class="locate" aria-label="Lokasi saya">
          <svg width="18" height="18" viewBox="0 0 18 18" fill="none" stroke="#475569" stroke-width="1.500"><circle cx="9" cy="9" r="7.800" /><path d="M9 1v4.500M9 12.500V17M1 9h4.500M12.500 9H17" /></svg>
        </button>
      </div>

      <section class="card place-card">
        <h3>Lokasi Pengiriman</h3>
        <p>{delivery}</p>
        <p>Latitude: -6.220882</p>
        <p>Longitude: 106.830086</p>
        <p class="distance">
          <svg width="14" height="14" viewBox="0 0 14 14" fill="none" stroke="#3f8cf3" stroke-width="1.300"><circle cx="2.700" cy="11.400" r="1.900" /><circle cx="11" cy="2.500" r="1.900" /><path d="M4.800 11.400h6a2.200 2.200 0 0 0 0-4.400H3a2.200 2.200 0 0 1 0-4.400h6" /></svg>
          Jarak Tempuh: 7.59 km (7588 meters)
        </p>
      </section>

      <section class="card bill">
        <h3 class="ruled">Tanggal Pengiriman</h3>
        <h3 class="ruled">Rincian Belanja</h3>
        {#each sections as s}
          <div class="group">
            <h4>{s.title}</h4>
            {#each s.rows as [name, amount]}
              <div class="row"><span>{name}</span><span>{amount}</span></div>
            {/each}
          </div>
        {/each}
      </section>

      <h2 class="second">Pilih Tanggal Pengiriman</h2>
      <div class="dates">
        <section class="calendar">
          <div class="month">
            <span>Januari</span><span>2025</span>
            <button class="prev" aria-label="Bulan sebelumnya"><svg width="8" height="12" viewBox="0 0 8 12" fill="none" stroke="#111" stroke-width="1.500"><path d="M6.500 1l-5 5 5 5" /></svg></button>
            <button aria-label="Bulan berikutnya"><svg width="8" height="12" viewBox="0 0 8 12" fill="none" stroke="#111" stroke-width="1.500"><path d="M1.500 1l5 5-5 5" /></svg></button>
          </div>
          <div class="grid">
            {#each weekdays as d}<div class="weekday">{d}</div>{/each}
          </div>
          <div class="grid">
            {#each days as d}
              <button class="day" class:out={d.out}><span class={d.mark}>{d.label}</span></button>
            {/each}
          </div>
        </section>
        <ul class="legend">
          {#each legend as [kind, text]}<li><span class={kind}></span>{text}</li>{/each}
        </ul>
      </div>
    </main>
    <div class="scrollbar">
      <svg width="5" height="3" viewBox="0 0 5 3" fill="#505050"><path d="M0 3L2.500 0 5 3z" /></svg>
      <div class="track"><span class="above"></span><span class="thumb"></span><span class="below"></span></div>
      <svg width="5" height="3" viewBox="0 0 5 3" fill="#505050"><path d="M0 0l2.500 3L5 0z" /></svg>
    </div>
  </div>
</div>

<style>
  :global(body) { margin: 0; }
  * { box-sizing: border-box; }
  button { padding: 0; border: 0; background: none; font: inherit; color: inherit; display: flex; align-items: center; justify-content: center; cursor: pointer; }
  h2, h3, h4, p, ul { margin: 0; padding: 0; }

  .window { height: 100vh; display: flex; flex-direction: column; overflow: hidden; border: 1px solid #757575; background: #fff; font: 12px/18px 'Open Sans', 'Noto Sans', sans-serif; color: #000; }
  .chrome { flex: none; background: #211d2f; }
  .tabs { display: flex; height: 39px; padding-left: 6px; }
  .tab-menu { width: 28px; height: 28px; margin: 5px 6px 0 0; border-radius: 10px; background: #3c384a; }
  .tab { position: relative; display: flex; align-items: center; width: 232px; margin-top: 5px; padding: 0 8px 6px; border-radius: 10px 10px 0 0; background: #3c384a; color: #e9e6f0; }
  .tab::before, .tab::after { content: ''; position: absolute; bottom: 0; width: 10px; height: 10px; }
  .tab::before { left: -10px; background: radial-gradient(circle at 0 0, transparent 10px, #3c384a 10px); }
  .tab::after { right: -10px; background: radial-gradient(circle at 100% 0, transparent 10px, #3c384a 10px); }
  .tab span { flex: 1; margin-left: 8px; }
  .tab button { width: 16px; height: 16px; }
  .new-tab { width: 40px; }
  .window-buttons { display: flex; margin-left: auto; }
  .window-buttons button { width: 46px; }
  .toolbar { display: flex; align-items: center; height: 47px; padding: 0 4px; border-radius: 8px 8px 0 0; border-bottom: 1px solid #4c485a; background: #3c384a; }
  .toolbar > button { flex: none; width: 36px; height: 34px; }
  .omnibox { flex: 1; display: flex; align-items: center; height: 34px; margin: 0 8px; padding: 0 8px 0 5px; border-radius: 17px; background: #272336; color: #f0edf6; font-size: 13px; }
  .omnibox button { width: 32px; height: 28px; }
  .omnibox .site { width: 24px; height: 24px; margin-right: 8px; border-radius: 50%; background: #3c384a; }
  .url { flex: 1; white-space: nowrap; }
  .url i { font-style: normal; color: #bfbbca; }
  .divider { width: 2px; height: 16px; margin: 0 8px; background: #5a556b; }

  .viewport { flex: 1; min-height: 0; display: flex; overflow: hidden; }
  main { flex: 1; min-width: 0; height: 0; margin-top: -11px; padding: 0 calc((100% - 12px) / 8); }
  h2 { font: bold 18px/26px 'DejaVu Serif Condensed', 'DejaVu Serif', serif; text-align: center; margin-bottom: 5px; }
  h2.second { margin-top: 10px; }
  input { font: inherit; color: inherit; outline: none; }
  .field { display: block; width: 100%; height: 32px; padding: 1px 7px 0; border: 1px solid #d1d3d8; border-radius: 4px; background: #fff; }
  label { display: block; margin-top: 13px; }
  .search { display: flex; align-items: center; margin-top: -1px; border-color: #e6e7ea; }
  .search input { flex: 1; min-width: 0; padding: 0; border: 0; }

  .map { position: relative; height: 288px; margin: 11px 0 13px; border-radius: 4px; overflow: hidden; background: #ddd; }
  .tiles { display: block; width: 100%; height: 100%; }
  .name { font: 7px 'Noto Sans', sans-serif; text-anchor: middle; fill: #333; stroke: #fff; stroke-opacity: .75; stroke-width: 1.5px; paint-order: stroke; }
  .name.small { font-size: 6px; }
  .name.main { font-size: 8px; stroke: #fcd6a4; }
  .name.place { font-size: 11px; fill: #777; }
  .name.health { font-size: 8px; fill: #cc2b40; }
  .name.station { font-size: 8px; font-weight: bold; fill: #4257b2; }
  .name.sport { font-size: 7px; font-style: italic; fill: #1b7a52; stroke-opacity: .3; }
  .name.park { font-size: 9px; font-style: italic; fill: #3f5f48; stroke-opacity: .3; }
  .name.estate { font-size: 7px; font-style: italic; fill: #777; }
  .name.mall { font-size: 8px; font-style: italic; fill: #8f3f4a; }
  .name.big { font-size: 9px; }
  .name.water { font-size: 8px; font-style: italic; fill: #4a8fbd; }
  .parking { font: bold 12px 'Noto Sans', sans-serif; fill: #0d91d8; text-anchor: middle; }
  .zoom { position: absolute; left: 9px; top: 9px; width: 23px; border-radius: 2px; background: #fff; box-shadow: 0 0 0 1px #bbb; }
  .zoom button { width: 23px; height: 22px; }
  .zoom button + button { border-top: 1px solid #ccc; height: 23px; }
  .credit { position: absolute; right: 0; bottom: 0; padding: 0 4px; background: rgba(255, 255, 255, .8); color: #333; font: 9px/14px 'Liberation Sans', sans-serif; white-space: nowrap; }
  .credit a { color: #0078a8; text-decoration: none; }
  .locate { position: absolute; right: 6px; bottom: 6px; width: 30px; height: 30px; border-radius: 4px; background: #fff; }

  .card { border-radius: 4px; background: #fff3dd; }
  .place-card { padding: 13px 12px 11px; box-shadow: 0 4px 6px rgba(0, 0, 0, .12); }
  .place-card h3 { font-size: 12px; line-height: 18px; font-weight: 700; }
  .distance { display: flex; align-items: center; gap: 7px; margin-top: 6px; }
  .bill { margin-top: 12px; padding: 18px 18px 17px; box-shadow: 0 9px 14px rgba(0, 0, 0, .15); }
  .ruled { padding-bottom: 4px; border-bottom: 2px solid #2d2a27; font-size: 14px; line-height: 22px; font-weight: 600; }
  .ruled + .ruled { margin-top: 6px; }
  .group { padding-top: 7px; }
  .group:not(:last-child) { padding-bottom: 4px; border-bottom: 2px solid #2d2a27; }
  h4 { margin-bottom: 1px; font-size: 13px; line-height: 20px; font-weight: 600; }
  .row { display: flex; justify-content: space-between; }

  .dates { display: flex; gap: 6px; margin-top: 6px; }
  .calendar { width: 58%; padding: 18px; border-radius: 4px; background: #fff3dd; box-shadow: 0 9px 14px rgba(0, 0, 0, .15); }
  .month { display: flex; align-items: center; gap: 12px; height: 36px; padding: 0 12px; border-radius: 3px; background: #e6c593; box-shadow: 0 2px 3px rgba(0, 0, 0, .15); font: bold 18px/26px Inter, sans-serif; }
  .month button { width: 18px; height: 24px; }
  .month .prev { margin: 0 6px 0 auto; }
  .grid { display: grid; grid-template-columns: repeat(7, 1fr); gap: 6px; margin-top: 9px; }
  .weekday { height: 27px; border-radius: 3px; background: #e6c593; box-shadow: 0 2px 3px rgba(0, 0, 0, .15); font: 600 13px/27px Inter, sans-serif; text-align: center; }
  .day { aspect-ratio: 1; border-radius: 3px; background: #f9fafc; box-shadow: 0 1px 3px rgba(0, 0, 0, .2); font-size: 14px; font-weight: 600; }
  .day.out { color: #9ca3af; }
  .day span { width: 46px; height: 46px; border-radius: 50%; line-height: 46px; }
  .day .prep, .day .active, .day .open { color: #fff; text-shadow: 1px 1px 2px rgba(0, 0, 0, .3); }
  .prep { background: #bfdbfb; }
  .active { background: #ffe4a3; }
  .open { background: #c0f1e7; }
  .off { background: #ffbfc2; }
  .legend { width: 35.4%; padding: 36px 24px; border-radius: 10px; background: #fff3dd; box-shadow: 0 0 2px rgba(0, 0, 0, .12); list-style: none; font-size: 14px; line-height: 24px; }
  .legend li { display: flex; align-items: center; gap: 7px; margin-bottom: 12px; }
  .legend span { width: 24px; height: 24px; border: 1px solid #e2e2e8; border-radius: 50%; }

  .scrollbar { flex: none; width: 11px; display: flex; flex-direction: column; align-items: center; padding: 6px 0; background: #f1f1f1; }
  .track { flex: 1; display: flex; flex-direction: column; width: 7px; }
  .thumb { flex: 969; background: #c1c1c1; }
  .above { flex: 215; }
  .below { flex: 148; }
</style>
